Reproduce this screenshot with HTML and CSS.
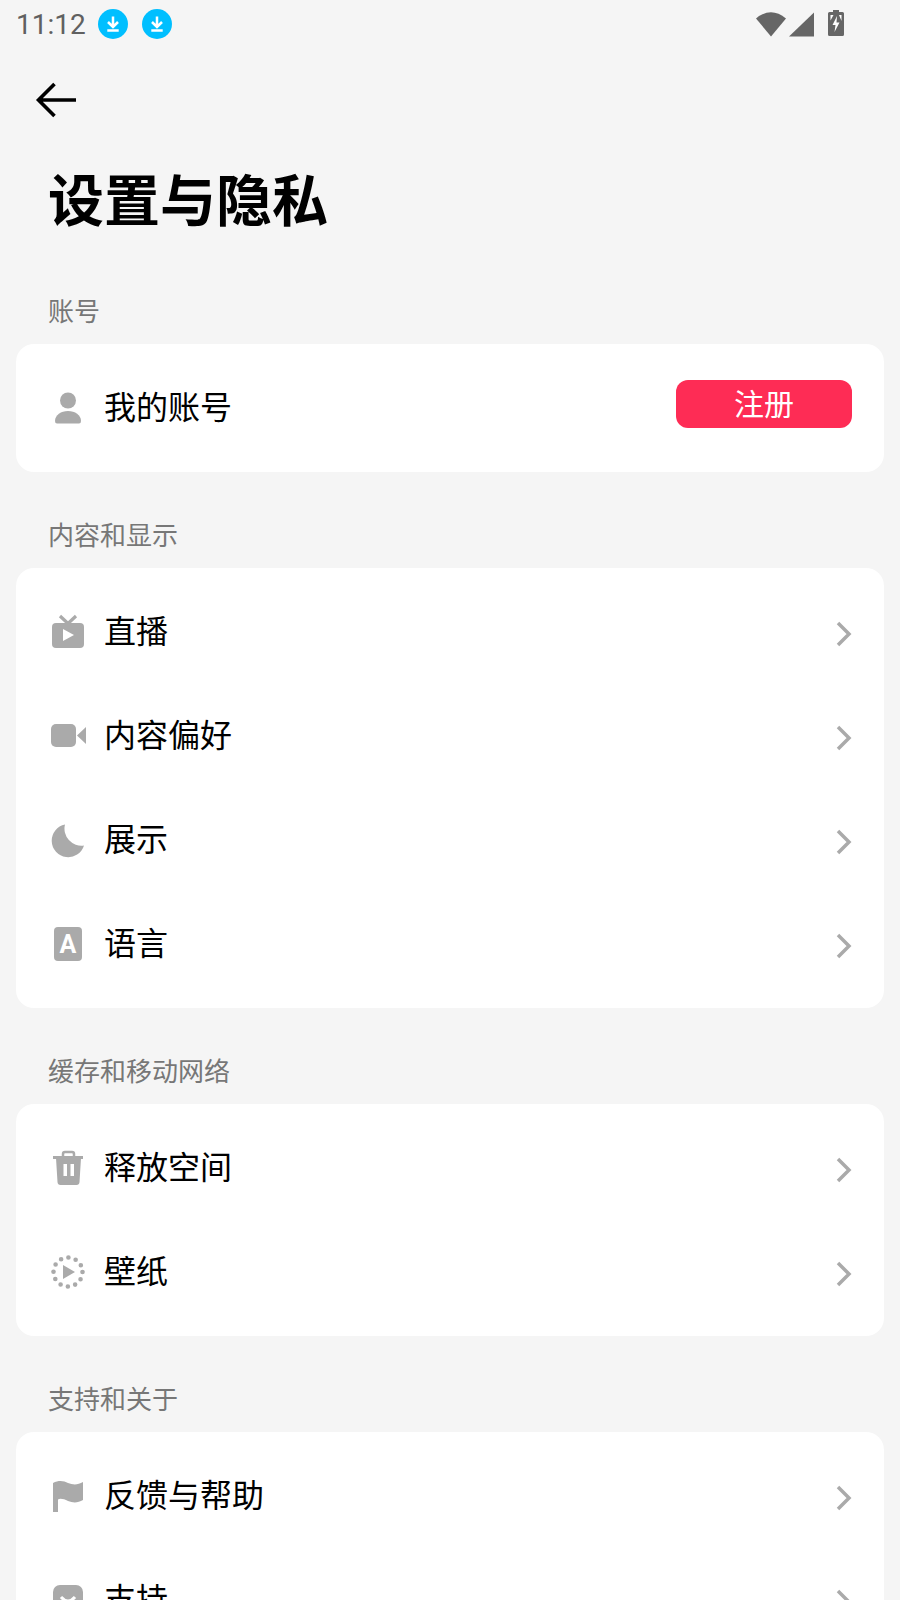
FILE: index.html
```html
<!DOCTYPE html>
<html lang="zh-CN">
<head>
    <meta charset="UTF-8">
    <meta name="viewport" content="width=device-width, initial-scale=1.0">
    <title>设置与隐私</title>
    <link rel="stylesheet" href="styles.css">
</head>
<body>
    <div class="status-bar">
        <span class="time">11:12</span>
        <svg class="dl" viewBox="0 0 30 30"><circle cx="15" cy="15" r="15" fill="#00bfff"/><path d="M15 7.500v10M10 13l5 5 5-5M9.300 21.500h11.400" fill="none" stroke="#fff" stroke-width="2.500"/></svg>
        <svg class="dl" viewBox="0 0 30 30"><circle cx="15" cy="15" r="15" fill="#00bfff"/><path d="M15 7.500v10M10 13l5 5 5-5M9.300 21.500h11.400" fill="none" stroke="#fff" stroke-width="2.500"/></svg>
        <div class="status-right">
            <svg width="30" height="26" viewBox="0 0 30 26"><path d="M0 7.500Q15-5 30 7.500L15 25.500Z" fill="#666"/></svg>
            <svg width="25" height="26" viewBox="0 0 25 26"><path d="M25 1.500V25.500H0Z" fill="#666"/></svg>
            <svg class="battery" width="16" height="26" viewBox="0 0 16 26"><path d="M5 0h6v2h3.500q1.500 0 1.500 1.500v21q0 1.500-1.500 1.500h-13Q0 26 0 24.500v-21Q0 2 1.500 2H5Z" fill="#666"/><path d="M9 6 4.500 15h3L6.500 22l5-9.500h-3Z" fill="#fff"/><path d="M2.500 5h3l-3 5.500ZM11 5h2.500v6Z" fill="#fff"/></svg>
        </div>
    </div>

    <div class="header">
        <svg width="44" height="40" viewBox="0 0 44 40"><path d="M42 20H5M20.500 4 4.500 20l16 16" fill="none" stroke="#000" stroke-width="3.600"/></svg>
    </div>
    <h1 class="title">设置与隐私</h1>

    <div class="section-label">账号</div>
    <div class="card">
        <div class="row">
            <svg class="icon" viewBox="0 0 36 36"><circle cx="18" cy="10.500" r="8"/><path d="M5 31c0-6 6-10 13-10s13 4 13 10q0 2.500-2 2.500H7Q5 33.500 5 31Z"/></svg>
            <span class="row-text">我的账号</span>
            <span class="signup">注册</span>
        </div>
    </div>

    <div class="section-label">内容和显示</div>
    <div class="card">
        <div class="row">
            <svg class="icon" viewBox="0 0 36 36"><path d="M10 2 18 9.500 26 2" fill="none" stroke="#aaa" stroke-width="3.200"/><rect x="2" y="9" width="32" height="25" rx="4"/><path d="M13 15v12l11-6Z" fill="#fff"/></svg>
            <span class="row-text">直播</span>
            <svg class="chevron" viewBox="0 0 16 26"><path d="M2 2 13 13 2 24"/></svg>
        </div>
        <div class="row">
            <svg class="icon" viewBox="0 0 36 36"><rect x="1" y="6" width="25" height="23" rx="5"/><path d="M27 17.500 36 9V26Z"/></svg>
            <span class="row-text">内容偏好</span>
            <svg class="chevron" viewBox="0 0 16 26"><path d="M2 2 13 13 2 24"/></svg>
        </div>
        <div class="row">
            <svg class="icon" viewBox="0 0 36 36"><path d="M15 2.500A16.500 16.500 0 1 0 34 23.500 17 17 0 0 1 15 2.500Z"/></svg>
            <span class="row-text">展示</span>
            <svg class="chevron" viewBox="0 0 16 26"><path d="M2 2 13 13 2 24"/></svg>
        </div>
        <div class="row">
            <svg class="icon" viewBox="0 0 36 36"><rect x="4" y="1" width="28" height="34" rx="4"/><text class="icon-letter" x="18" y="27">A</text></svg>
            <span class="row-text">语言</span>
            <svg class="chevron" viewBox="0 0 16 26"><path d="M2 2 13 13 2 24"/></svg>
        </div>
    </div>

    <div class="section-label">缓存和移动网络</div>
    <div class="card">
        <div class="row">
            <svg class="icon" viewBox="0 0 36 36"><path d="M13 7V4q0-2 2-2h7q2 0 2 2v3" fill="none" stroke="#aaa" stroke-width="2.500"/><rect x="3" y="6" width="30" height="3"/><path d="M6 8h25l-1.500 24q-.2 3-3 3h-16q-2.800 0-3-3Z"/><path d="M13.500 14h3.500v12h-3.500ZM20.500 14h3.500v12h-3.500Z" fill="#fff"/></svg>
            <span class="row-text">释放空间</span>
            <svg class="chevron" viewBox="0 0 16 26"><path d="M2 2 13 13 2 24"/></svg>
        </div>
        <div class="row">
            <svg class="icon" viewBox="0 0 36 36"><circle cx="18" cy="18" r="14.500" fill="none" stroke="#aaa" stroke-width="4.600" stroke-linecap="round" stroke-dasharray="0 7.592"/><path d="M13 11v14l12-7Z"/></svg>
            <span class="row-text">壁纸</span>
            <svg class="chevron" viewBox="0 0 16 26"><path d="M2 2 13 13 2 24"/></svg>
        </div>
    </div>

    <div class="section-label">支持和关于</div>
    <div class="card">
        <div class="row">
            <svg class="icon" viewBox="0 0 36 36"><path d="M3 5C9 2 14 3 18 5C23 7 28 7 33 4V22C28 25 23 25 18 23C14 21 10 20 8 21.500V34H3Z"/></svg>
            <span class="row-text">反馈与帮助</span>
            <svg class="chevron" viewBox="0 0 16 26"><path d="M2 2 13 13 2 24"/></svg>
        </div>
        <div class="row">
            <svg class="icon" viewBox="0 0 36 36"><rect x="3" y="3" width="30" height="30" rx="7"/><path d="M11 15q7 8 14 0" fill="none" stroke="#fff" stroke-width="3"/></svg>
            <span class="row-text">支持</span>
            <svg class="chevron" viewBox="0 0 16 26"><path d="M2 2 13 13 2 24"/></svg>
        </div>
    </div>
</body>
</html>
```

FILE: styles.css
```css
html, body {
    height: 1600px;
    overflow: hidden;
}

body {
    margin: 0;
    background-color: #f5f5f5;
    font-family: "Noto Sans CJK SC", "Noto Sans", sans-serif;
    color: #000;
}

.status-bar {
    display: flex;
    align-items: center;
    height: 48px;
    padding-left: 16px;
    gap: 14px;
}

.time {
    font-family: Roboto, sans-serif;
    font-size: 28px;
    color: #606060;
    margin-right: -2px;
}

.dl {
    width: 30px;
    height: 30px;
}

.status-right {
    display: flex;
    align-items: center;
    gap: 3px;
    margin-left: auto;
    margin-right: 56px;
    padding-bottom: 1px;
}

.battery {
    margin-left: 11px;
    margin-top: -2px;
}

.header {
    display: flex;
    align-items: center;
    height: 104px;
    padding-left: 34px;
}

.title {
    margin: 9px 0 15px;
    padding-left: 48px;
    font-size: 56px;
    line-height: 72px;
    font-weight: 700;
}

.section-label {
    height: 36px;
    padding: 44px 0 16px 48px;
    font-size: 26px;
    line-height: 36px;
    color: #777;
}

.card {
    margin: 0 16px;
    padding: 12px 0;
    background-color: #fff;
    border-radius: 18px;
}

.row {
    display: flex;
    align-items: center;
    height: 104px;
    padding: 0 32px 0 34px;
}

.icon {
    width: 36px;
    height: 36px;
    fill: #aaa;
    flex-shrink: 0;
}

.icon-letter {
    font-family: Roboto, sans-serif;
    font-size: 25px;
    font-weight: 700;
    fill: #fff;
    text-anchor: middle;
}

.row-text {
    margin: 0 0 6px 18px;
    font-size: 32px;
    line-height: 44px;
}

.signup {
    margin-left: auto;
    width: 176px;
    height: 48px;
    margin-bottom: 8px;
    background-color: #fe2c55;
    border-radius: 12px;
    color: #fff;
    font-size: 30px;
    line-height: 44px;
    text-align: center;
}

.chevron {
    margin-left: auto;
    width: 16px;
    height: 26px;
    margin-top: 3px;
    fill: none;
    stroke: #aaa;
    stroke-width: 3.500;
}
```
